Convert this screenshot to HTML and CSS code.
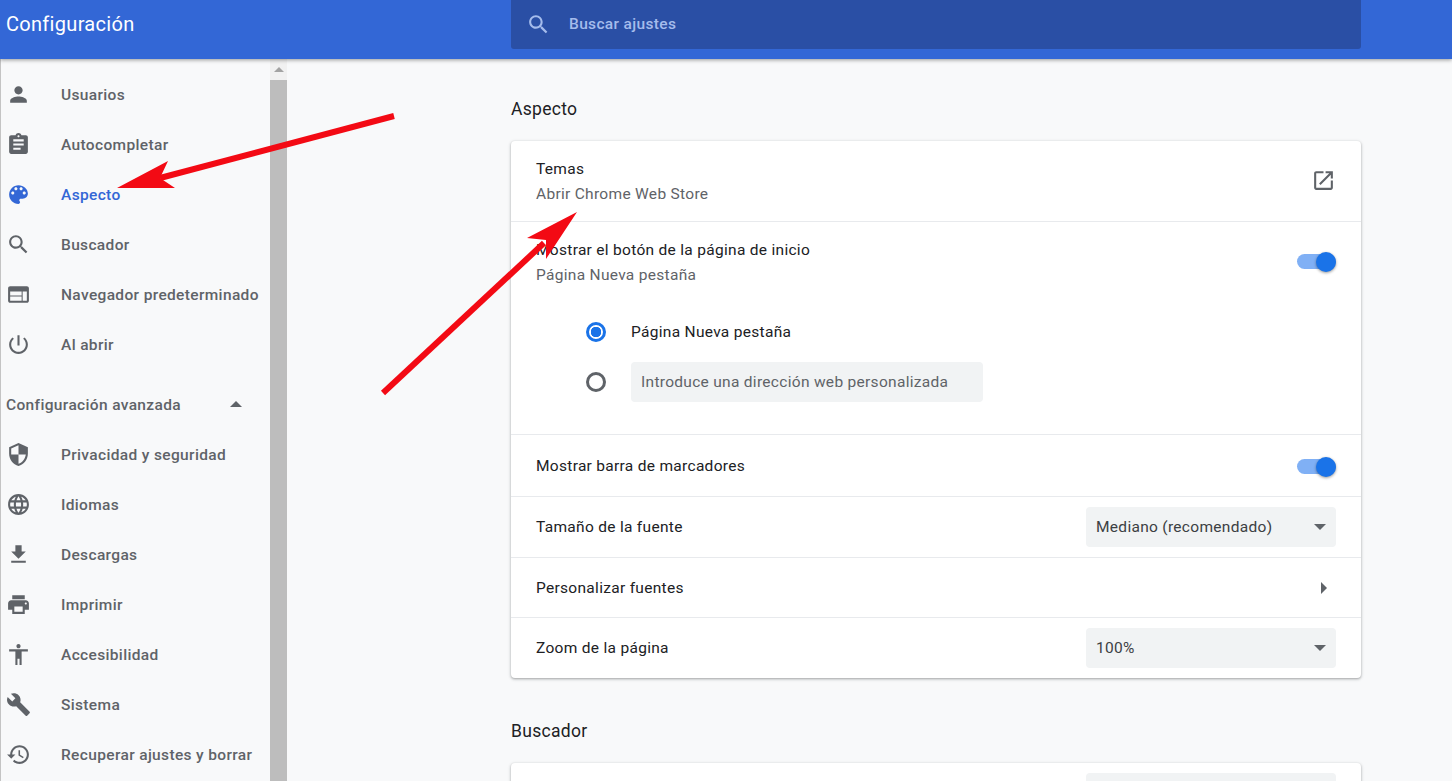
FILE: index.html
```html
<!DOCTYPE html>
<html lang="es">
<head>
    <meta charset="UTF-8">
    <title>Configuración</title>
    <link rel="stylesheet" href="styles.css">
</head>
<body>
    <header class="topbar">
        <h1 class="title">Configuración</h1>
        <div class="search">
            <svg class="icon" viewBox="0 0 24 24"><path d="M15.5 14h-.79l-.28-.27C15.41 12.59 16 11.11 16 9.5 16 5.91 13.09 3 9.5 3S3 5.91 3 9.5 5.91 16 9.5 16c1.61 0 3.09-.59 4.23-1.57l.27.28v.79l5 4.99L20.49 19l-4.99-5zm-6 0C7.01 14 5 11.99 5 9.5S7.01 5 9.5 5 14 7.01 14 9.5 11.99 14 9.5 14z"/></svg>
            <span>Buscar ajustes</span>
        </div>
    </header>

    <div class="layout">
        <aside class="sidebar">
            <nav class="menu">
                <a class="item"><svg class="icon" viewBox="0 0 24 24"><path d="M12 12c2.21 0 4-1.79 4-4s-1.79-4-4-4-4 1.79-4 4 1.79 4 4 4zm0 2c-2.67 0-8 1.34-8 4v2h16v-2c0-2.66-5.33-4-8-4z"/></svg>Usuarios</a>
                <a class="item"><svg class="icon" viewBox="0 0 24 24"><path d="M19 3h-4.18C14.4 1.84 13.3 1 12 1c-1.3 0-2.4.84-2.82 2H5c-1.1 0-2 .9-2 2v14c0 1.1.9 2 2 2h14c1.1 0 2-.9 2-2V5c0-1.1-.9-2-2-2zm-7 0c.55 0 1 .45 1 1s-.45 1-1 1-1-.45-1-1 .45-1 1-1zm2 14H7v-2h7v2zm3-4H7v-2h10v2zm0-4H7V7h10v2z"/></svg>Autocompletar</a>
                <a class="item active"><svg class="icon" viewBox="0 0 24 24"><path d="M12 3c-4.97 0-9 4.03-9 9s4.03 9 9 9c.83 0 1.5-.67 1.5-1.5 0-.39-.15-.74-.39-1.01-.23-.26-.38-.61-.38-.99 0-.83.67-1.5 1.5-1.5H16c2.76 0 5-2.24 5-5 0-4.42-4.03-8-9-8zm-5.5 9c-.83 0-1.5-.67-1.5-1.5S5.67 9 6.5 9 8 9.67 8 10.5 7.33 12 6.5 12zm3-4C8.67 8 8 7.33 8 6.5S8.67 5 9.5 5s1.5.67 1.5 1.5S10.33 8 9.5 8zm5 0c-.83 0-1.5-.67-1.5-1.5S13.67 5 14.5 5s1.5.67 1.5 1.5S15.33 8 14.5 8zm3 4c-.83 0-1.5-.67-1.5-1.5S16.67 9 17.5 9s1.5.67 1.5 1.5-.67 1.5-1.5 1.5z"/></svg>Aspecto</a>
                <a class="item"><svg class="icon" viewBox="0 0 24 24"><path d="M15.5 14h-.79l-.28-.27C15.41 12.59 16 11.11 16 9.5 16 5.91 13.09 3 9.5 3S3 5.91 3 9.5 5.91 16 9.5 16c1.61 0 3.09-.59 4.23-1.57l.27.28v.79l5 4.99L20.49 19l-4.99-5zm-6 0C7.01 14 5 11.99 5 9.5S7.01 5 9.5 5 14 7.01 14 9.5 11.99 14 9.5 14z"/></svg>Buscador</a>
                <a class="item"><svg class="icon" viewBox="0 0 24 24"><path d="M20 4H4c-1.1 0-1.99.9-1.99 2L2 18c0 1.1.9 2 2 2h16c1.1 0 2-.9 2-2V6c0-1.1-.9-2-2-2zm-5 14H4v-4h11v4zm0-5H4V9h11v4zm5 5h-4V9h4v9z"/></svg>Navegador predeterminado</a>
                <a class="item"><svg class="icon" viewBox="0 0 24 24"><path d="M13 3h-2v10h2V3zm4.83 2.17l-1.42 1.42C17.99 7.86 19 9.81 19 12c0 3.87-3.13 7-7 7s-7-3.13-7-7c0-2.19 1.01-4.14 2.58-5.42L6.17 5.17C4.23 6.82 3 9.26 3 12c0 4.97 4.03 9 9 9s9-4.03 9-9c0-2.74-1.23-5.18-3.17-6.83z"/></svg>Al abrir</a>

                <div class="advanced">
                    <span>Configuración avanzada</span>
                    <i class="caret-up"></i>
                </div>

                <a class="item"><svg class="icon" viewBox="0 0 24 24"><path d="M12 1L3 5v6c0 5.55 3.84 10.74 9 12 5.16-1.26 9-6.45 9-12V5l-9-4zm0 10.99h7c-.53 4.12-3.28 7.79-7 8.94V12H5V6.3l7-3.11v8.8z"/></svg>Privacidad y seguridad</a>
                <a class="item"><svg class="icon" viewBox="0 0 24 24"><path d="M11.99 2C6.47 2 2 6.48 2 12s4.47 10 9.99 10C17.52 22 22 17.52 22 12S17.52 2 11.99 2zm6.93 6h-2.95c-.32-1.25-.78-2.45-1.38-3.56 1.84.63 3.37 1.91 4.33 3.56zM12 4.04c.83 1.2 1.48 2.53 1.91 3.96h-3.82c.43-1.43 1.08-2.76 1.91-3.96zM4.26 14C4.1 13.36 4 12.69 4 12s.1-1.36.26-2h3.38c-.08.66-.14 1.32-.14 2 0 .68.06 1.34.14 2H4.26zm.82 2h2.95c.32 1.25.78 2.45 1.38 3.56-1.84-.63-3.37-1.9-4.33-3.56zm2.95-8H5.08c.96-1.66 2.49-2.93 4.33-3.56C8.81 5.55 8.35 6.75 8.03 8zM12 19.96c-.83-1.2-1.48-2.53-1.91-3.96h3.82c-.43 1.43-1.08 2.76-1.91 3.96zM14.34 14H9.66c-.09-.66-.16-1.32-.16-2 0-.68.07-1.35.16-2h4.68c.09.65.16 1.32.16 2 0 .68-.07 1.34-.16 2zm.25 5.56c.6-1.11 1.06-2.31 1.38-3.56h2.95c-.96 1.65-2.49 2.93-4.33 3.56zM16.36 14c.08-.66.14-1.32.14-2 0-.68-.06-1.34-.14-2h3.38c.16.64.26 1.31.26 2s-.1 1.36-.26 2h-3.38z"/></svg>Idiomas</a>
                <a class="item"><svg class="icon" viewBox="0 0 24 24"><path d="M19 9h-4V3H9v6H5l7 7 7-7zM5 18v2h14v-2H5z"/></svg>Descargas</a>
                <a class="item"><svg class="icon" viewBox="0 0 24 24"><path d="M19 8H5c-1.66 0-3 1.34-3 3v6h4v4h12v-4h4v-6c0-1.66-1.34-3-3-3zm-3 11H8v-5h8v5zm3-7c-.55 0-1-.45-1-1s.45-1 1-1 1 .45 1 1-.45 1-1 1zm-1-9H6v4h12V3z"/></svg>Imprimir</a>
                <a class="item"><svg class="icon" viewBox="0 0 24 24"><path d="M12 2c1.1 0 2 .9 2 2s-.9 2-2 2-2-.9-2-2 .9-2 2-2zm9 7h-6v13h-2v-6h-2v6H9V9H3V7h18v2z"/></svg>Accesibilidad</a>
                <a class="item"><svg class="icon" viewBox="0 0 24 24"><path d="M22.7 19l-9.1-9.1c.9-2.3.4-5-1.5-6.9-2-2-5-2.4-7.4-1.3L9 6 6 9 1.6 4.7C.4 7.1.9 10.1 2.9 12.1c1.9 1.9 4.6 2.4 6.9 1.5l9.1 9.1c.4.4 1 .4 1.4 0l2.3-2.3c.5-.4.5-1.1.1-1.4z"/></svg>Sistema</a>
                <a class="item"><svg class="icon" viewBox="0 0 24 24"><path d="M13 3c-4.97 0-9 4.03-9 9H1l3.89 3.89.07.14L9 12H6c0-3.87 3.13-7 7-7s7 3.13 7 7-3.13 7-7 7c-1.93 0-3.68-.79-4.94-2.06l-1.42 1.42C8.27 19.99 10.51 21 13 21c4.97 0 9-4.03 9-9s-4.03-9-9-9zm-1 5v5l4.28 2.54.72-1.21-3.5-2.08V8H12z"/></svg>Recuperar ajustes y borrar</a>
            </nav>
            <div class="scrollbar">
                <div class="scroll-btn"><i class="scroll-arrow"></i></div>
                <div class="scroll-thumb"></div>
            </div>
        </aside>

        <main class="content">
            <h2 class="section-title">Aspecto</h2>
            <section class="card">
                <div class="row row-link">
                    <div>
                        <div class="line">Temas</div>
                        <div class="line sub">Abrir Chrome Web Store</div>
                    </div>
                    <svg class="icon open-icon" viewBox="0 0 24 24"><path d="M19 19H5V5h7V3H5c-1.11 0-2 .9-2 2v14c0 1.1.89 2 2 2h14c1.1 0 2-.9 2-2v-7h-2v7zM14 3v2h3.59l-9.83 9.83 1.41 1.41L19 6.41V10h2V3h-7z"/></svg>
                </div>
                <div class="row-home">
                    <div class="home-head">
                        <div>
                            <div class="line">Mostrar el botón de la página de inicio</div>
                            <div class="line sub">Página Nueva pestaña</div>
                        </div>
                        <div class="toggle"><i class="knob"></i></div>
                    </div>
                    <div class="radios">
                        <div class="radio-row">
                            <i class="radio checked"></i>
                            <span>Página Nueva pestaña</span>
                        </div>
                        <div class="radio-row">
                            <i class="radio"></i>
                            <input class="url-input" type="text" placeholder="Introduce una dirección web personalizada">
                        </div>
                    </div>
                </div>
                <div class="row row-bookmarks">
                    <span>Mostrar barra de marcadores</span>
                    <div class="toggle"><i class="knob"></i></div>
                </div>
                <div class="row row-font">
                    <span>Tamaño de la fuente</span>
                    <div class="select">Mediano (recomendado)<i class="caret-down"></i></div>
                </div>
                <div class="row row-fonts">
                    <span>Personalizar fuentes</span>
                    <i class="caret-right"></i>
                </div>
                <div class="row row-zoom">
                    <span>Zoom de la página</span>
                    <div class="select">100%<i class="caret-down"></i></div>
                </div>
            </section>

            <h2 class="section-title second">Buscador</h2>
            <section class="card">
                <div class="row row-engine">
                    <div class="select"></div>
                </div>
            </section>
        </main>
    </div>

    <!-- flechas rojas pintadas encima de la captura -->
    <svg class="arrows" viewBox="0 0 1452 781">
        <line x1="394" y1="116" x2="160" y2="178" />
        <polygon points="117,188 168,161 160,178 175,188" />
        <line x1="383" y1="393" x2="544" y2="243" />
        <polygon points="577,212 527,238 546,240 546,259" />
    </svg>
</body>
</html>
```

FILE: styles.css
```css
html, body {
    height: 100%;
}

body {
    margin: 0;
    overflow: hidden;
    display: flex;
    flex-direction: column;
    background: #f8f9fa;
    color: #202124;
    font-family: Roboto, "Liberation Sans", sans-serif;
    font-size: 15.5px;
    letter-spacing: 0.3px;
}

.icon {
    width: 25px;
    height: 25px;
    flex: none;
    fill: currentColor;
}

/* barra superior */
.topbar {
    position: relative;
    z-index: 2;
    flex: none;
    height: 59px;
    display: flex;
    align-items: flex-start;
    background: #3367d6;
    box-shadow: 0 1px 4px rgba(0, 0, 0, 0.4);
}

.title {
    width: 505px;
    margin: 0;
    padding-left: 6px;
    color: #fff;
    font-size: 20px;
    font-weight: 400;
    line-height: 49px;
}

.search {
    width: 835px;
    height: 49px;
    padding-left: 15px;
    display: flex;
    align-items: center;
    gap: 18px;
    background: #2a4fa5;
    border-radius: 0 0 3px 3px;
    color: #a5bcec;
    font-weight: 500;
    letter-spacing: 0.35px;
}

.search span {
    margin-bottom: 2px;
}

.layout {
    flex: 1;
    display: flex;
    overflow: hidden;
}

/* menu lateral */
.sidebar {
    flex: none;
    width: 287px;
    display: flex;
}

.menu {
    width: 269px;
    padding-top: 10px;
    border-left: 1px solid #c4c4c4;
    box-sizing: content-box;
}

.item {
    height: 50px;
    box-sizing: border-box;
    padding: 2px 0 0 5px;
    display: flex;
    align-items: center;
    gap: 30px;
    color: #5f6368;
    font-weight: 500;
    letter-spacing: 0.35px;
}

.item .icon {
    margin-bottom: 2px;
}

.item.active {
    color: #3367d6;
}

.advanced {
    height: 50px;
    box-sizing: border-box;
    margin-top: 10px;
    padding: 2px 0 0 5px;
    display: flex;
    align-items: center;
    justify-content: space-between;
    width: 241px;
    color: #5f6368;
    font-weight: 500;
    letter-spacing: 0.35px;
}

.caret-up {
    margin-bottom: 2px;
    border: 6px solid transparent;
    border-top: 0;
    border-bottom-color: #5f6368;
}

.scrollbar {
    width: 17px;
    display: flex;
    flex-direction: column;
}

.scroll-btn {
    height: 21px;
    display: flex;
    align-items: center;
    justify-content: center;
    background: #f1f1f1;
}

.scroll-arrow {
    border: 5px solid transparent;
    border-top: 0;
    border-bottom-color: #a3a3a3;
}

.scroll-thumb {
    flex: 1;
    background: #bdbdbd;
}

/* contenido */
.content {
    flex: 1;
    padding: 30px 0 0 224px;
}

.section-title {
    width: 850px;
    margin: 0 0 12px;
    font-size: 17.5px;
    font-weight: 400;
    line-height: 40px;
}

.section-title.second {
    margin: 33px 0 12px;
}

.card {
    width: 850px;
    background: #fff;
    border-radius: 4px;
    box-shadow: 0 1px 2px rgba(60, 64, 67, 0.3), 0 1px 3px 1px rgba(60, 64, 67, 0.15);
}

.row {
    padding: 0 25px;
    display: flex;
    align-items: center;
    justify-content: space-between;
    border-top: 1px solid #e8eaed;
}

.row-link {
    height: 80px;
    box-sizing: border-box;
    padding-top: 2px;
    border-top: 0;
}

.open-icon {
    margin-bottom: 4px;
    color: #5f6368;
}

.row-bookmarks {
    height: 61px;
}

.row-bookmarks .toggle {
    margin-top: 1px;
}

.row-font {
    height: 60px;
}

.row-fonts {
    height: 59px;
}

.row-zoom {
    height: 60px;
}

.row-engine {
    height: 60px;
    border-top: 0;
    justify-content: flex-end;
}

.line {
    line-height: 25px;
}

.sub {
    color: #5f6368;
}

.row-home {
    border-top: 1px solid #e8eaed;
    height: 213px;
    padding: 16px 25px 0;
    box-sizing: border-box;
}

.home-head {
    display: flex;
    align-items: center;
    justify-content: space-between;
}

.home-head .toggle {
    margin-bottom: 4px;
}

.toggle {
    position: relative;
    width: 39px;
    height: 15px;
    background: #80b0f5;
    border-radius: 8px;
}

.knob {
    position: absolute;
    top: -2px;
    right: 0;
    width: 20px;
    height: 20px;
    background: #1a73e8;
    border-radius: 50%;
    box-shadow: 0 1px 3px rgba(0, 0, 0, 0.4);
}

.radios {
    margin-top: 19px;
    padding-left: 50px;
}

.radio-row {
    height: 50px;
    display: flex;
    align-items: center;
    gap: 25px;
}

.radio {
    width: 14px;
    height: 14px;
    border: 3px solid #5f6368;
    border-radius: 50%;
}

.radio.checked {
    border-color: #1a73e8;
    background: radial-gradient(circle, #1a73e8 0, #1a73e8 5px, #fff 5.5px);
}

.url-input {
    width: 352px;
    height: 40px;
    padding: 0 10px;
    box-sizing: border-box;
    border: none;
    border-radius: 4px;
    background: #f1f3f4;
    font: inherit;
    letter-spacing: inherit;
}

.url-input::placeholder {
    color: #5f6368;
    opacity: 1;
}

.select {
    width: 250px;
    height: 40px;
    padding: 0 10px;
    box-sizing: border-box;
    display: flex;
    align-items: center;
    justify-content: space-between;
    background: #f1f3f4;
    border-radius: 4px;
    color: #3c4043;
}

.caret-down {
    border: 6px solid transparent;
    border-bottom: 0;
    border-top-color: #5f6368;
}

.caret-right {
    margin-right: 9px;
    border: 6px solid transparent;
    border-right: 0;
    border-left-color: #5f6368;
}

/* flechas */
.arrows {
    position: absolute;
    top: 0;
    left: 0;
    z-index: 3;
    width: 1452px;
    height: 781px;
    pointer-events: none;
}

.arrows line {
    stroke: #f30a14;
    stroke-width: 6;
}

.arrows polygon {
    fill: #f30a14;
}
```
